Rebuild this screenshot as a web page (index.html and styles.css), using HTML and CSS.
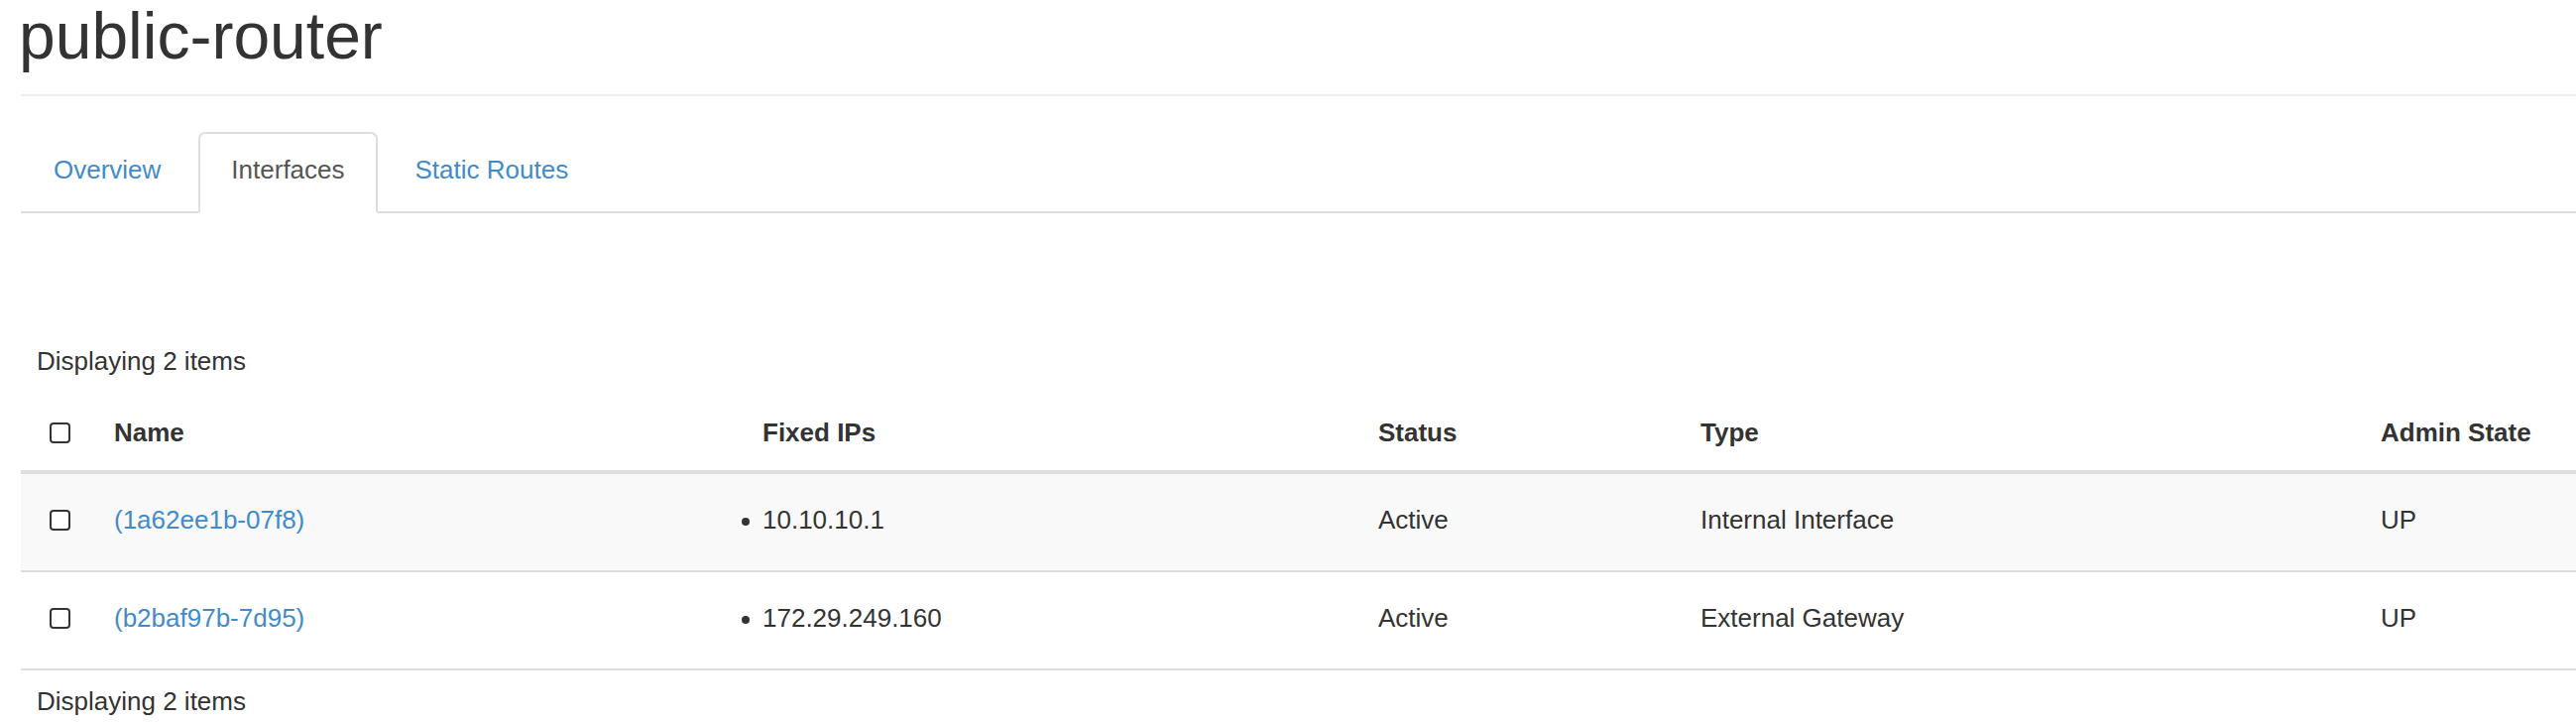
FILE: index.html
```html
<!DOCTYPE html>
<html lang="en">
<head>
<meta charset="utf-8">
<title>public-router</title>
<link rel="stylesheet" href="styles.css">
</head>
<body>
<div class="page">
  <div class="page-header">
    <h1 class="title">public-router</h1>
  </div>
  <ul class="tabs">
    <li class="tab"><a class="tab-link" href="#">Overview</a></li>
    <li class="tab active"><a class="tab-link" href="#">Interfaces</a></li>
    <li class="tab"><a class="tab-link" href="#">Static Routes</a></li>
  </ul>
  <div class="tab-content">
    <table class="data">
      <colgroup>
        <col class="col-check">
        <col class="col-name">
        <col class="col-ips">
        <col class="col-status">
        <col class="col-type">
        <col class="col-admin">
      </colgroup>
      <thead>
        <tr class="caption-row">
          <th class="caption" colspan="6">Displaying 2 items</th>
        </tr>
        <tr class="head-row">
          <th class="cell-check"><input class="cb" type="checkbox"></th>
          <th>Name</th>
          <th>Fixed IPs</th>
          <th>Status</th>
          <th>Type</th>
          <th>Admin State</th>
        </tr>
      </thead>
      <tbody>
        <tr class="row odd">
          <td class="cell-check"><input class="cb" type="checkbox"></td>
          <td><a class="link" href="#">(1a62ee1b-07f8)</a></td>
          <td><ul class="ips"><li class="ip">10.10.10.1</li></ul></td>
          <td>Active</td>
          <td>Internal Interface</td>
          <td>UP</td>
        </tr>
        <tr class="row even">
          <td class="cell-check"><input class="cb" type="checkbox"></td>
          <td><a class="link" href="#">(b2baf97b-7d95)</a></td>
          <td><ul class="ips"><li class="ip">172.29.249.160</li></ul></td>
          <td>Active</td>
          <td>External Gateway</td>
          <td>UP</td>
        </tr>
      </tbody>
      <tfoot>
        <tr>
          <td class="footer" colspan="6">Displaying 2 items</td>
        </tr>
      </tfoot>
    </table>
  </div>
</div>
</body>
</html>
```

FILE: styles.css
```css
html, body {
  margin: 0;
  padding: 0;
  background: #ffffff;
}

body {
  font-family: "Liberation Sans", Helvetica, Arial, sans-serif;
  font-size: 26px;
  line-height: 37px;
  color: #333333;
}

.page {
  padding-left: 21px;
}

.page-header {
  padding-bottom: 23px;
  border-bottom: 2px solid #eeeeee;
}

.title {
  margin: 0 0 0 -2px;
  font-size: 66px;
  line-height: 72px;
  font-weight: normal;
  color: #333333;
}

.tabs {
  list-style: none;
  margin: 36px 0 0 0;
  padding: 0;
  display: flex;
  border-bottom: 2px solid #dddddd;
}

.tab {
  margin: 0 5px -2px 0;
}

.tab-link {
  display: block;
  padding: 18px 31px 23px;
  border: 2px solid transparent;
  border-radius: 7px 7px 0 0;
  color: #428bca;
  text-decoration: none;
}

.tab.active .tab-link {
  color: #555555;
  background: #ffffff;
  border-color: #dddddd #dddddd transparent #dddddd;
}

.tab-content {
  margin-top: 131px;
}

.data {
  width: 100%;
  table-layout: fixed;
  border-collapse: separate;
  border-spacing: 0;
}

.col-check { width: 78px; }
.col-name { width: 654px; }
.col-ips { width: 621px; }
.col-status { width: 325px; }
.col-type { width: 686px; }

.data th,
.data td {
  text-align: left;
  vertical-align: middle;
  padding: 0 0 0 16px;
  white-space: nowrap;
}

.caption-row .caption {
  font-weight: normal;
  padding: 0 0 20px 16px;
}

.head-row th {
  font-weight: bold;
  padding-top: 15px;
  padding-bottom: 19px;
  border-bottom: 4px solid #dddddd;
}

.row td {
  padding-top: 28px;
  padding-bottom: 32px;
}

.row.even td {
  border-top: 2px solid #dddddd;
}

.row.odd td {
  background: #f9f9f9;
}

.footer {
  border-top: 2px solid #dddddd;
  padding-top: 13px !important;
}

.data .cell-check {
  padding-left: 29px;
}

.cb {
  -webkit-appearance: none;
  appearance: none;
  display: inline-block;
  box-sizing: border-box;
  width: 21px;
  height: 21px;
  margin: 0;
  border: 2px solid #333333;
  border-radius: 4px;
  background: #ffffff;
  vertical-align: middle;
  position: relative;
  top: -2px;
}

.link {
  color: #428bca;
  text-decoration: none;
}

.ips {
  list-style: none;
  margin: 0;
  padding: 0;
}

.ip::before {
  content: "";
  display: inline-block;
  width: 8px;
  height: 8px;
  border-radius: 50%;
  background: #333333;
  margin-left: -21px;
  margin-right: 13px;
  vertical-align: middle;
}
```
